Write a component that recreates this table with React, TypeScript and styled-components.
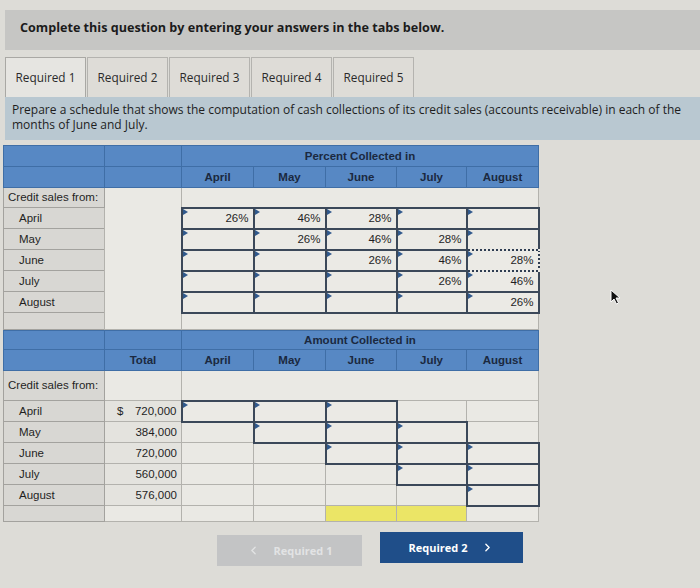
import React from 'react';
import styled, { createGlobalStyle, css } from 'styled-components';
import { ChevronLeft, ChevronRight } from 'lucide-react';

const GlobalStyle = createGlobalStyle`
  html, body {
    margin: 0;
    padding: 0;
    background: #dddcd7;
  }
  body {
    font-family: 'Liberation Sans', Arial, sans-serif;
  }
`;

const MONTHS = ['April', 'May', 'June', 'July', 'August'];
const TABS = ['Required 1', 'Required 2', 'Required 3', 'Required 4', 'Required 5'];
const WIDTHS = [101, 77, 72, 72, 71, 70, 72];

// percent table: value per [row][col], null = empty input
const PERCENTS: (string | null)[][] = [
  ['26%', '46%', '28%', null, null],
  [null, '26%', '46%', '28%', null],
  [null, null, '26%', '46%', '28%'],
  [null, null, null, '26%', '46%'],
  [null, null, null, null, '26%'],
];

const TOTALS = ['720,000', '384,000', '720,000', '560,000', '576,000'];

const Page = styled.div`
  position: relative;
  width: 700px;
  height: 588px;
  overflow: hidden;
  padding-top: 10px;
  box-sizing: border-box;
`;

const HeaderBar = styled.div`
  margin-left: 5px;
  height: 40px;
  background: #c6c6c4;
  display: flex;
  align-items: center;
  padding-left: 15px;
  padding-bottom: 6px;
  box-sizing: border-box;
  font-family: 'Open Sans', 'DejaVu Sans', sans-serif;
  font-weight: 700;
  font-size: 12.6px;
  color: #1b1b1b;
`;

const TabRow = styled.div`
  display: flex;
  margin-top: 7px;
  padding-left: 5px;
  height: 40px;
`;

const Tab = styled.div<{ $active?: boolean }>`
  width: 81px;
  height: 40px;
  box-sizing: border-box;
  border: 1px solid #b4b3af;
  border-bottom: none;
  margin-right: 1px;
  background: #dedcd7;
  display: flex;
  align-items: center;
  justify-content: center;
  padding-bottom: 2px;
  font-family: 'Open Sans', 'DejaVu Sans', sans-serif;
  font-size: 11.8px;
  color: #2a2a2a;
  ${p =>
    p.$active &&
    css`
      background: #e6e5e1;
      border-color: #a9a8a4;
    `}
`;

const Prompt = styled.div`
  margin-left: 5px;
  height: 43px;
  background: #b9c8d1;
  padding: 5px 8px 0 7px;
  box-sizing: border-box;
  font-family: 'Open Sans', 'DejaVu Sans', sans-serif;
  font-size: 12px;
  line-height: 15px;
  color: #1e1e1e;
`;

const Table = styled.table<{ $top: number }>`
  margin-top: ${p => p.$top}px;
  margin-left: 3px;
  border-collapse: collapse;
  table-layout: fixed;
  width: 535px;
  font-size: 11.5px;
  line-height: 13px;
  color: #1f1f1f;

  th,
  td {
    box-sizing: border-box;
  }
`;

const Head = styled.th<{ $h: number }>`
  height: ${p => p.$h}px;
  padding: 0;
  background: #5788c4;
  border: 1px solid #3f6ea6;
  color: #1b2940;
  font-weight: 700;
  font-size: 11.5px;
  text-align: center;
`;

const LabelCell = styled.td<{ $indent?: boolean; $h: number }>`
  height: ${p => p.$h}px;
  padding: 0 0 0 ${p => (p.$indent ? 15 : 4)}px;
  background: #d8d7d3;
  border: 1px solid #a3a29e;
  white-space: nowrap;
`;

const PlainCell = styled.td<{ $yellow?: boolean }>`
  padding: 0 4px;
  background: ${p => (p.$yellow ? '#ebe566' : '#eae9e4')};
  border: 1px solid #b3b2ad;
`;

const TotalCell = styled.td`
  padding: 0 4px 0 12px;
  background: #e4e3de;
  border: 1px solid #b3b2ad;
`;

const Money = styled.div`
  display: flex;
  justify-content: space-between;
`;

const dots = (dir: string) =>
  `repeating-linear-gradient(${dir}, #2e3d52 0 2px, #ebeae5 2px 4px)`;

const InputCell = styled.td<{ $focus?: boolean }>`
  position: relative;
  padding: 0 4px 0 0;
  background: #ebeae5;
  border: 2px solid #3b4859;
  text-align: right;
  &::before {
    content: '';
    position: absolute;
    top: 0;
    left: 0;
    border-top: 3px solid transparent;
    border-bottom: 3px solid transparent;
    border-left: 5px solid #30598c;
  }
  ${p =>
    p.$focus &&
    css`
      &::after {
        content: '';
        position: absolute;
        top: -2px;
        bottom: -2px;
        left: 0;
        right: -2px;
        background: ${dots('90deg')} top / 100% 2px no-repeat,
          ${dots('90deg')} bottom / 100% 2px no-repeat,
          ${dots('0deg')} right / 2px 100% no-repeat;
      }
    `}
`;

const ButtonRow = styled.div`
  display: flex;
  align-items: flex-start;
  gap: 18px;
  margin-top: 10px;
  padding-left: 217px;
`;

const NavButton = styled.div<{ $primary?: boolean }>`
  height: 31px;
  width: ${p => (p.$primary ? 143 : 145)}px;
  margin-top: ${p => (p.$primary ? 0 : 3)}px;
  display: flex;
  align-items: center;
  justify-content: center;
  gap: 14px;
  font-family: 'Open Sans', 'DejaVu Sans', sans-serif;
  font-weight: 700;
  font-size: 11px;
  background: ${p => (p.$primary ? '#1f4e89' : '#c3c4c5')};
  color: ${p => (p.$primary ? '#ffffff' : '#e2e3e4')};
`;

const Cursor = styled.svg`
  position: absolute;
  left: 610px;
  top: 289px;
`;

const Cols = () => (
  <colgroup>
    {WIDTHS.map((w, i) => (
      <col key={i} style={{ width: w }} />
    ))}
  </colgroup>
);

const amountInput = (row: number, col: number) => col >= row && col <= row + 2;

export default function App() {
  return (
    <Page>
      <GlobalStyle />
      <HeaderBar>Complete this question by entering your answers in the tabs below.</HeaderBar>
      <TabRow>
        {TABS.map((t, i) => (
          <Tab key={t} $active={i === 0}>
            {t}
          </Tab>
        ))}
      </TabRow>
      <Prompt>
        Prepare a schedule that shows the computation of cash collections of its credit sales
        (accounts receivable) in each of the months of June and July.
      </Prompt>

      <Table $top={5}>
        <Cols />
        <thead>
          <tr>
            <Head $h={21} />
            <Head $h={21} />
            <Head $h={21} colSpan={5}>
              Percent Collected in
            </Head>
          </tr>
          <tr>
            <Head $h={21} />
            <Head $h={21} />
            {MONTHS.map(m => (
              <Head $h={21} key={m}>
                {m}
              </Head>
            ))}
          </tr>
        </thead>
        <tbody>
          <tr>
            <LabelCell $h={20}>Credit sales from:</LabelCell>
            <PlainCell rowSpan={7} />
            <PlainCell colSpan={5} />
          </tr>
          {MONTHS.map((m, r) => (
            <tr key={m}>
              <LabelCell $h={21} $indent>
                {m}
              </LabelCell>
              {PERCENTS[r].map((v, c) => (
                <InputCell key={c} $focus={r === 2 && c === 4}>
                  {v}
                </InputCell>
              ))}
            </tr>
          ))}
          <tr>
            <LabelCell $h={17} />
            <PlainCell colSpan={5} />
          </tr>
        </tbody>
      </Table>

      <Table $top={0}>
        <Cols />
        <thead>
          <tr>
            <Head $h={19} />
            <Head $h={19} />
            <Head $h={19} colSpan={5}>
              Amount Collected in
            </Head>
          </tr>
          <tr>
            <Head $h={21} />
            <Head $h={21}>Total</Head>
            {MONTHS.map(m => (
              <Head $h={21} key={m}>
                {m}
              </Head>
            ))}
          </tr>
        </thead>
        <tbody>
          <tr>
            <LabelCell $h={30}>Credit sales from:</LabelCell>
            <PlainCell />
            <PlainCell colSpan={5} />
          </tr>
          {MONTHS.map((m, r) => (
            <tr key={m}>
              <LabelCell $h={21} $indent>
                {m}
              </LabelCell>
              <TotalCell>
                <Money>
                  <span>{r === 0 ? '$' : ''}</span>
                  <span>{TOTALS[r]}</span>
                </Money>
              </TotalCell>
              {MONTHS.map((_, c) =>
                amountInput(r, c) ? <InputCell key={c} /> : <PlainCell key={c} />,
              )}
            </tr>
          ))}
          <tr>
            <LabelCell $h={16} />
            <PlainCell />
            <PlainCell />
            <PlainCell />
            <PlainCell $yellow />
            <PlainCell $yellow />
            <PlainCell />
          </tr>
        </tbody>
      </Table>

      <ButtonRow>
        <NavButton>
          <ChevronLeft size={13} strokeWidth={2.5} />
          <span>Required 1</span>
        </NavButton>
        <NavButton $primary>
          <span>Required 2</span>
          <ChevronRight size={13} strokeWidth={2.5} />
        </NavButton>
      </ButtonRow>

      <Cursor width="12" height="16" viewBox="0 0 12 16">
        <path d="M1 1 L1 13 L4 10 L6.5 15 L8.5 14 L6 9 L10 9 Z" fill="#111" stroke="#fff" strokeWidth="1" />
      </Cursor>
    </Page>
  );
}
